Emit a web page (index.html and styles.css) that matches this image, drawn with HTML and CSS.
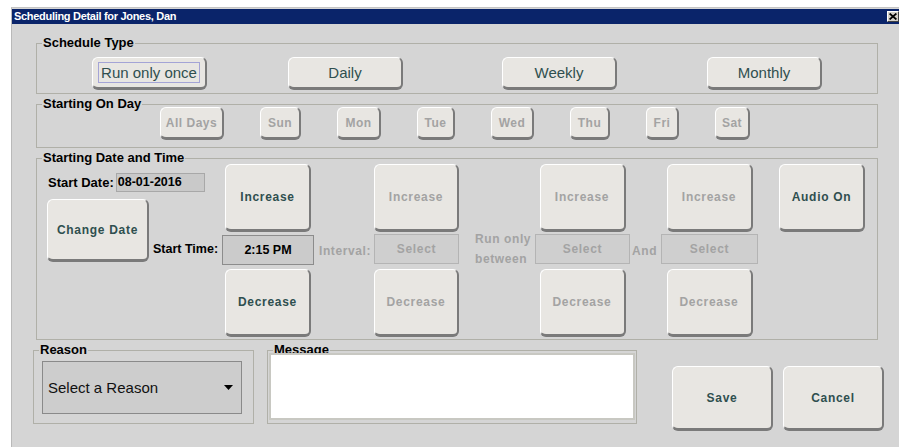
FILE: index.html
```html
<!DOCTYPE html>
<html>
<head>
<meta charset="utf-8">
<title>Scheduling Detail</title>
<link rel="stylesheet" href="styles.css">
</head>
<body>
<div class="window">
  <div class="titlebar">
    <span class="title">Scheduling Detail for Jones, Dan</span>
    <span class="close"><svg width="8" height="7" viewBox="0 0 8 7"><path d="M0.6 0.5 L7.4 6.5 M7.4 0.5 L0.6 6.5" stroke="#000" stroke-width="1.7" fill="none"/></svg></span>
  </div>

  <div class="content">
    <section class="group group-type">
      <div class="group-title">Schedule Type</div>
      <div class="type-row">
        <button class="btn btn-type"><span class="focus">Run only once</span></button>
        <button class="btn btn-type">Daily</button>
        <button class="btn btn-type">Weekly</button>
        <button class="btn btn-type">Monthly</button>
      </div>
    </section>

    <section class="group group-days">
      <div class="days-label"><div class="group-title">Starting On Day</div></div>
      <div class="days-row">
        <button class="btn btn-day off w-all">All Days</button>
        <button class="btn btn-day off w-sun">Sun</button>
        <button class="btn btn-day off w-mon">Mon</button>
        <button class="btn btn-day off w-tue">Tue</button>
        <button class="btn btn-day off w-wed">Wed</button>
        <button class="btn btn-day off w-thu">Thu</button>
        <button class="btn btn-day off w-fri">Fri</button>
        <button class="btn btn-day off w-sat">Sat</button>
      </div>
    </section>

    <section class="group group-time">
      <div class="date-block">
        <div class="group-title">Starting Date and Time</div>
        <div class="date-row">
          <span class="lbl-strong">Start Date:</span>
          <span class="date-field">08-01-2016</span>
        </div>
        <div class="change-row">
          <button class="btn btn-change">Change Date</button>
          <span class="lbl-strong lbl-time">Start Time:</span>
        </div>
      </div>

      <div class="spin col1">
        <button class="btn btn-tall">Increase</button>
        <div class="time-field">2:15 PM</div>
        <button class="btn btn-tall">Decrease</button>
      </div>

      <div class="lbl-dim lbl-interval">Interval:</div>

      <div class="spin col2">
        <button class="btn btn-tall off">Increase</button>
        <div class="select-field">Select</div>
        <button class="btn btn-tall off">Decrease</button>
      </div>

      <div class="lbl-dim lbl-between">Run only<br>between</div>

      <div class="spin col3">
        <button class="btn btn-tall off">Increase</button>
        <div class="select-field">Select</div>
        <button class="btn btn-tall off">Decrease</button>
      </div>

      <div class="lbl-dim lbl-and">And</div>

      <div class="spin col4">
        <button class="btn btn-tall off">Increase</button>
        <div class="select-field">Select</div>
        <button class="btn btn-tall off">Decrease</button>
      </div>

      <button class="btn btn-tall btn-audio">Audio On</button>
    </section>

    <div class="bottom">
      <section class="group group-reason">
        <div class="group-title">Reason</div>
        <div class="reason-select">
          <span>Select a Reason</span>
          <svg class="caret" width="9" height="5" viewBox="0 0 9 5"><path d="M0 0 H9 L4.5 5 Z" fill="#000"/></svg>
        </div>
      </section>

      <section class="group group-message">
        <div class="group-title">Message</div>
        <div class="message-box"></div>
      </section>

      <button class="btn btn-action btn-save">Save</button>
      <button class="btn btn-action btn-cancel">Cancel</button>
    </div>
  </div>
</div>
</body>
</html>
```

FILE: styles.css
```css
* {
  box-sizing: border-box;
}

html,
body {
  margin: 0;
  height: 100%;
}

body {
  background: #ffffff;
  font-family: "Liberation Sans", Arial, sans-serif;
  overflow: hidden;
}

/* window frame */
.window {
  margin: 7px 0 0 11px;
  height: 440px;
  background: #d5d5d5;
  border-left: 1px solid #b9b9b9;
  border-top: 1px solid #c4c4c4;
  padding-top: 1px;
}

.titlebar {
  height: 15px;
  background: #0a246a;
  display: flex;
  align-items: center;
  justify-content: space-between;
  padding-left: 2px;
}

.title {
  color: #ffffff;
  font-weight: bold;
  font-size: 11px;
  letter-spacing: -0.3px;
  line-height: 15px;
}

.close {
  width: 12px;
  height: 11px;
  background: #d4d0c8;
  border: 1px solid;
  border-color: #ffffff #404040 #404040 #ffffff;
  display: flex;
  align-items: center;
  justify-content: center;
}

.content {
  padding: 19px 0 0 24px;
}

/* group boxes */
.group {
  border: 1px solid #b0b0a8;
  width: 842px;
}

.group-title {
  width: fit-content;
  background: #d5d5d5;
  color: #000000;
  font-size: 13px;
  font-weight: bold;
  line-height: 14px;
  padding: 0 1px;
  margin-left: 5px;
}

/* buttons */
.btn {
  margin: 0;
  padding: 0;
  font-family: inherit;
  background: #e8e6e2;
  border-style: solid;
  border-width: 1px 2px 3px 1px;
  border-color: #ffffff #7a7a7a #7a7a7a #ffffff;
  border-radius: 6px;
  color: #2f4f4f;
  font-size: 12px;
  font-weight: bold;
  letter-spacing: 0.7px;
  display: flex;
  align-items: center;
  justify-content: center;
  flex: none;
}

.btn.off {
  color: #a3a3a3;
}

/* schedule type */
.group-type .group-title {
  margin-top: -8px;
}

.type-row {
  display: flex;
  margin-top: 7px;
  padding: 0 0 3px 55px;
}

.btn-type {
  width: 115px;
  height: 33px;
  font-size: 15px;
  font-weight: normal;
  letter-spacing: 0;
}

.type-row .btn:nth-child(2) {
  margin-left: 81px;
}

.type-row .btn:nth-child(3) {
  margin-left: 99px;
}

.type-row .btn:nth-child(4) {
  margin-left: 90px;
}

.focus {
  border: 1px solid #a4a4d6;
  padding: 0 2px;
  line-height: 19px;
}

/* starting on day */
.group-days {
  margin-top: 10px;
  display: flex;
  padding: 2px 0 7px 0;
}

.days-label {
  width: 123px;
}

.days-label .group-title {
  margin-top: -10px;
}

.days-row {
  display: flex;
  gap: 36px;
}

.btn-day {
  height: 33px;
  letter-spacing: 0.5px;
}

.w-all { width: 64px; }
.w-sun { width: 41px; }
.w-mon { width: 44px; }
.w-tue { width: 38px; }
.w-wed { width: 43px; }
.w-thu { width: 40px; }
.w-fri { width: 33px; }
.w-sat { width: 35px; }

/* starting date and time */
.group-time {
  margin-top: 10px;
  display: flex;
  padding: 5px 0 2px 0;
}

.date-block {
  width: 185px;
  display: flex;
  flex-direction: column;
}

.date-block .group-title {
  margin-top: -13px;
}

.lbl-strong {
  color: #000000;
  font-size: 13px;
  font-weight: bold;
}

.date-row {
  display: flex;
  align-items: center;
  gap: 2px;
  margin-top: 8px;
  padding-left: 11px;
}

.date-field {
  width: 89px;
  height: 19px;
  background: #c9c9c9;
  border: 1px solid #a8a8a8;
  font-size: 12.5px;
  font-weight: bold;
  line-height: 17px;
  padding-left: 1px;
  color: #000000;
}

.change-row {
  display: flex;
  align-items: flex-end;
  margin-top: 7px;
  padding-left: 10px;
}

.btn-change {
  width: 102px;
  height: 63px;
}

.lbl-time {
  font-size: 12.5px;
  line-height: 15px;
  margin: 0 0 5px 4px;
}

.spin {
  display: flex;
  flex-direction: column;
  align-items: center;
}

.btn-tall {
  width: 86px;
  height: 68px;
}

.col1 { width: 92px; }
.col2 { width: 85px; }
.col3 { width: 95px; }
.col4 { width: 97px; }

.col2 .btn-tall {
  width: 85px;
}

.time-field {
  width: 100%;
  height: 30px;
  margin: 3px 0 4px;
  background: #cbcbcb;
  border: 1px solid #8c8c8c;
  color: #000000;
  font-size: 12.5px;
  font-weight: bold;
  line-height: 28px;
  text-align: center;
}

.select-field {
  width: 100%;
  height: 30px;
  margin: 2px 0 5px;
  background: #cfcfcf;
  border: 1px solid #b4b4b4;
  color: #a3a3a3;
  font-size: 12px;
  font-weight: bold;
  letter-spacing: 0.7px;
  line-height: 28px;
  text-align: center;
}

.lbl-dim {
  align-self: center;
  color: #a3a3a3;
  font-size: 12px;
  font-weight: bold;
  letter-spacing: 0.6px;
}

.lbl-interval {
  width: 60px;
  padding-left: 5px;
}

.lbl-between {
  width: 76px;
  padding-left: 16px;
  line-height: 20px;
  margin-bottom: 4px;
}

.lbl-and {
  width: 31px;
  padding-left: 2px;
}

.btn-audio {
  margin-left: 21px;
}

/* reason, message and actions */
.bottom {
  display: flex;
  align-items: flex-start;
  margin: 10px 0 0 -3px;
}

.group-reason {
  width: 221px;
  padding-bottom: 9px;
}

.group-reason .group-title,
.group-message .group-title {
  margin-top: -8px;
}

.reason-select {
  width: 200px;
  height: 53px;
  margin: 4px 0 0 8px;
  background: #cdcdcd;
  border: 1px solid #8a8a8a;
  display: flex;
  align-items: center;
  justify-content: space-between;
  padding: 0 8px 0 5px;
  color: #111111;
  font-size: 15px;
}

.group-message {
  width: 370px;
  margin-left: 13px;
  padding-bottom: 3px;
}

.message-box {
  position: relative;
  width: 366px;
  height: 67px;
  margin: -4px 0 0 1px;
  background: #ffffff;
  border: 2px solid #c8c8c2;
}

.btn-action {
  width: 101px;
  height: 65px;
  margin-top: 16px;
}

.btn-save {
  margin-left: 35px;
}

.btn-cancel {
  margin-left: 10px;
}
```
